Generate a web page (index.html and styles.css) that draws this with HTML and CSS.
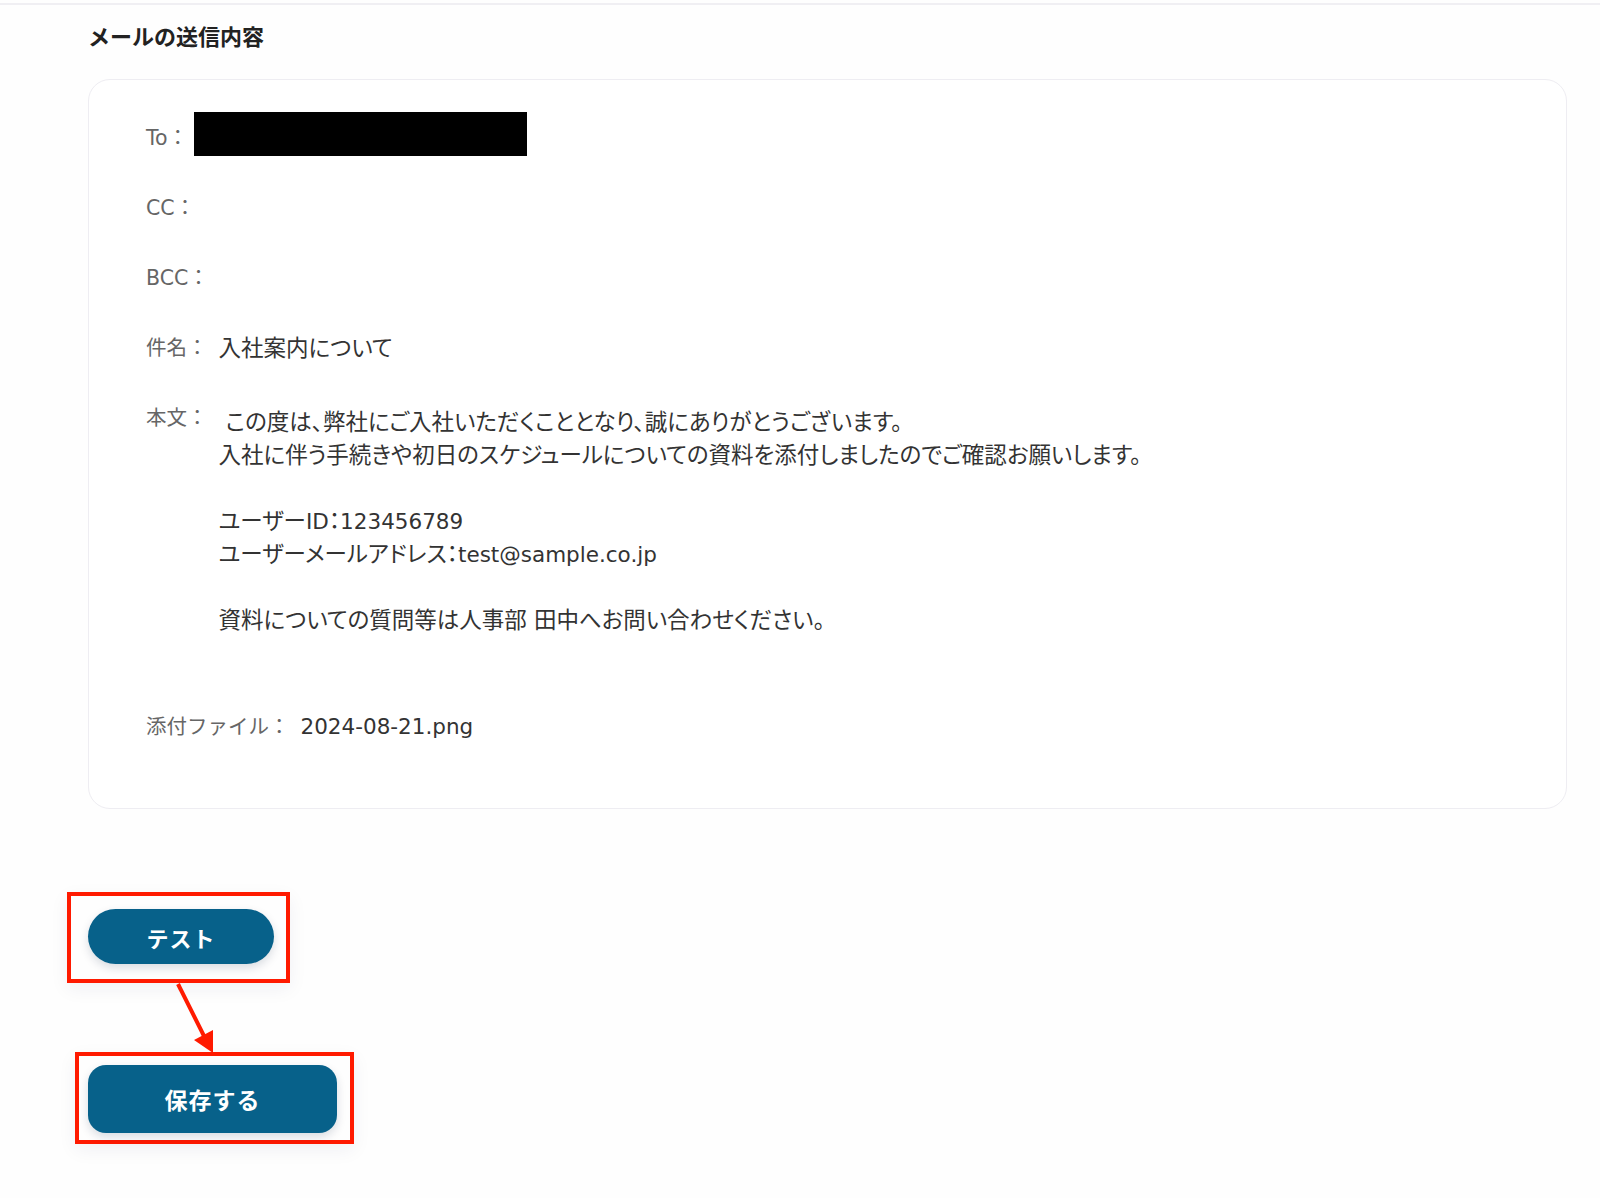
FILE: index.html
```html
<!DOCTYPE html>
<html lang="ja">
<head>
    <meta charset="UTF-8">
    <meta name="viewport" content="width=device-width, initial-scale=1.0">
    <title>メールの送信内容</title>
    <link rel="stylesheet" href="styles.css">
</head>
<body>
    <div class="topbar"></div>

    <div class="page">
        <h2 class="title">メールの送信内容</h2>

        <div class="mail-card">
            <div class="field">
                <span class="label">To：</span>
                <span class="redact"></span>
            </div>
            <div class="field">
                <span class="label">CC：</span>
            </div>
            <div class="field">
                <span class="label">BCC：</span>
            </div>
            <div class="field">
                <span class="label">件名：</span>
                <span class="value">入社案内について</span>
            </div>
            <div class="field">
                <span class="label">本文：</span>
                <div class="value body-text">
                    <p> この度は、弊社にご入社いただくこととなり、誠にありがとうございます。</p>
                    <p>入社に伴う手続きや初日のスケジュールについての資料を添付しましたのでご確認お願いします。</p>
                    <p class="blank"></p>
                    <p>ユーザー<span class="en">ID</span>：<span class="en">123456789</span></p>
                    <p>ユーザーメールアドレス：<span class="en">test@sample.co.jp</span></p>
                    <p class="blank"></p>
                    <p>資料についての質問等は人事部 田中へお問い合わせください。</p>
                </div>
            </div>
            <div class="field attach">
                <span class="label">添付ファイル：</span>
                <span class="value en">2024-08-21.png</span>
            </div>
        </div>

        <div class="actions">
            <div class="mark mark-test">
                <button class="btn btn-pill">テスト</button>
            </div>
            <div class="mark mark-save">
                <button class="btn btn-save">保存する</button>
            </div>
        </div>
    </div>

    <!-- 注釈の矢印 -->
    <svg class="arrow" width="60" height="80" viewBox="0 0 60 80">
        <line x1="8" y1="4" x2="36" y2="60" stroke="#ff1a00" stroke-width="4"/>
        <polygon points="43,73 24,60 43,50" fill="#ff1a00"/>
    </svg>
</body>
</html>
```

FILE: styles.css
```css
body {
    font-family: "DejaVu Sans", "Noto Sans CJK JP", sans-serif;
    background: #fefefe;
    margin: 0;
    padding: 0;
    color: #333;
}

.topbar {
    height: 3px;
    border-bottom: 2px solid #f0eff3;
}

.page {
    padding: 0 33px 40px 88px;
}

.title {
    margin: 15px 0 29px;
    font-family: "Noto Sans CJK JP", sans-serif;
    font-size: 22px;
    line-height: 30px;
    font-weight: 700;
    color: #222;
}

.mail-card {
    background: #fff;
    border: 1.5px solid #eeedf2;
    border-radius: 22px;
    padding: 42px 57px 65px;
    display: flex;
    flex-direction: column;
    gap: 38px;
}

.field {
    display: flex;
    align-items: flex-start;
    gap: 11px;
    min-height: 32px;
    line-height: 32px;
}

.label {
    font-size: 20.5px;
    color: #666;
    white-space: nowrap;
}

.value {
    font-size: 22.5px;
    font-feature-settings: "palt";
    color: #333;
}

.en {
    font-size: 21.5px;
}

.redact {
    display: block;
    width: 333px;
    height: 44px;
    margin: -10px 0 -2px -5px;
    background: #000;
}

.body-text {
    padding-top: 4px;
}

.body-text p {
    margin: 0;
    line-height: 33px;
    white-space: pre;
}

.body-text .blank {
    height: 33px;
}

.attach {
    margin-top: 36px;
}

.actions {
    display: flex;
    flex-direction: column;
    align-items: flex-start;
    margin-top: 83px;
}

.mark {
    border: 4px solid #ff1a00;
    box-shadow: 0 6px 18px rgba(40, 40, 80, 0.06);
}

.mark-test {
    margin-left: -21px;
    padding: 13px 12px 15px 17px;
}

.mark-save {
    margin-top: 69px;
    margin-left: -13px;
    padding: 9px 13px 7px 9px;
}

.btn {
    display: block;
    border: none;
    background: #07618a;
    color: #fff;
    font-family: "Noto Sans CJK JP", sans-serif;
    font-weight: 700;
    font-size: 22px;
    letter-spacing: 1px;
    box-shadow: 0 4px 10px rgba(0, 30, 60, 0.15);
    cursor: pointer;
}

.btn-pill {
    width: 186px;
    height: 55px;
    border-radius: 28px;
}

.btn-save {
    width: 249px;
    height: 68px;
    border-radius: 18px;
    font-size: 23px;
}

.arrow {
    position: absolute;
    left: 170px;
    top: 980px;
}
```
